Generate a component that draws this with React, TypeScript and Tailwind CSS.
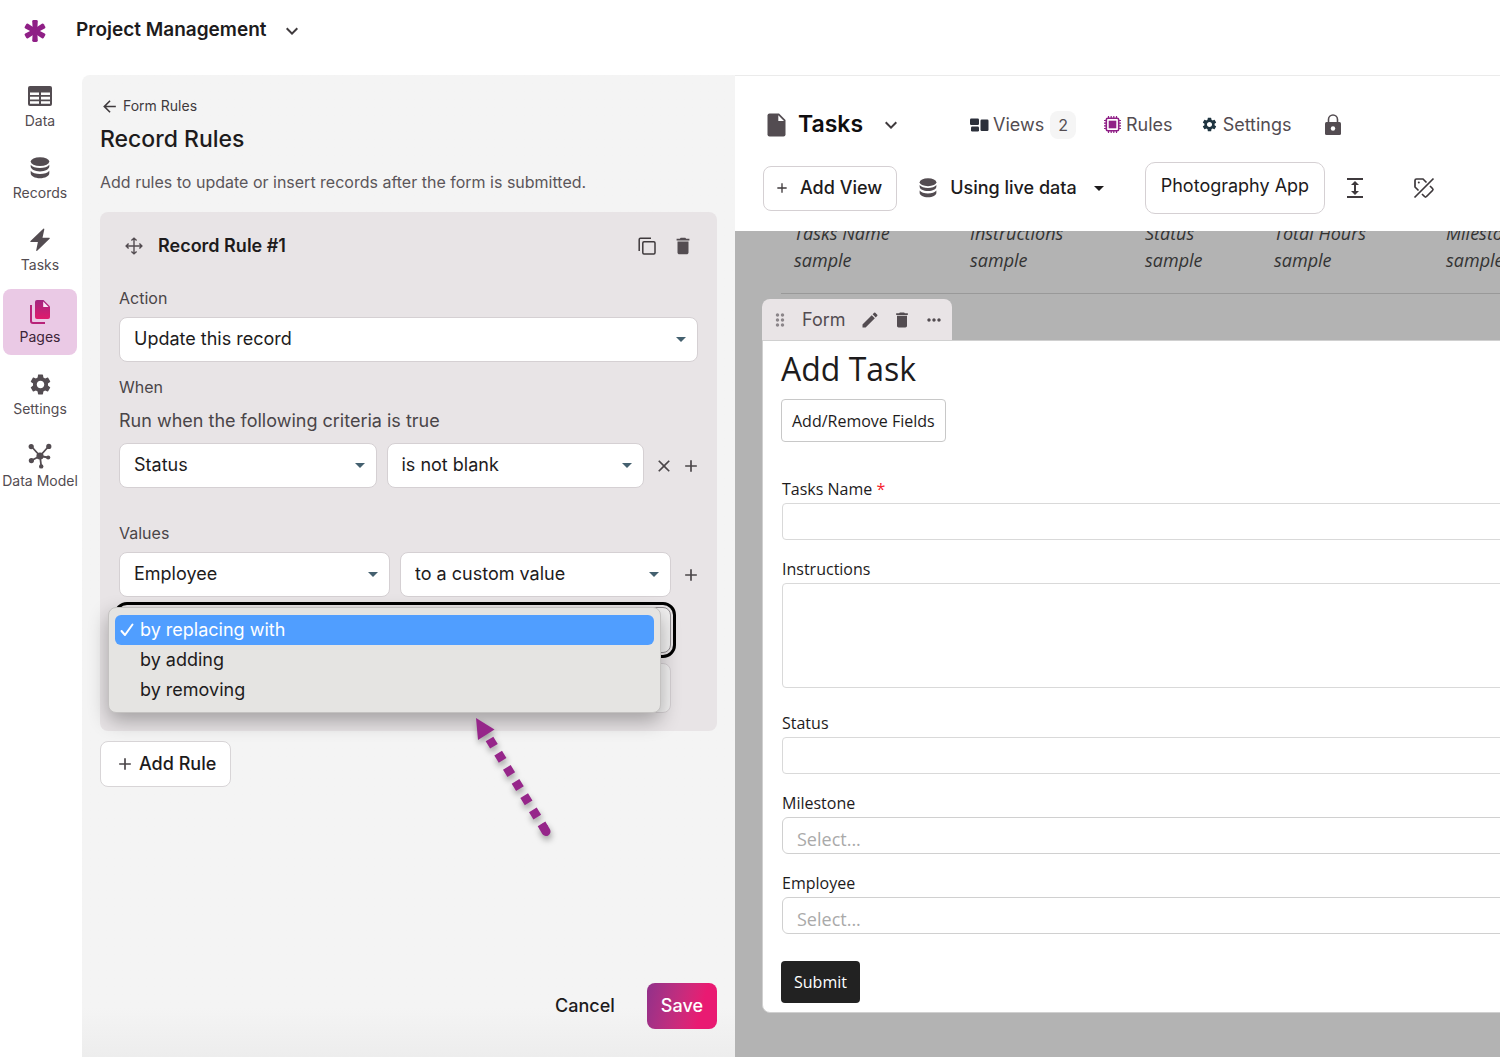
import { useState } from 'react';
import type { ReactNode, SelectHTMLAttributes } from 'react';
import { clsx } from 'clsx';
import {
  MdAdd,
  MdArrowBack,
  MdClose,
  MdDelete,
  MdDragIndicator,
  MdEdit,
  MdExpand,
  MdKeyboardArrowDown,
  MdMoreHoriz,
  MdSettings,
} from 'react-icons/md';

const LogoIcon = () => (
  <svg width="24" height="24" viewBox="0 0 24 24" fill="#8f1f86" aria-hidden="true">
    {[0, 60, 120, 180, 240, 300].map(angle => (
      <path key={angle} transform={`rotate(${angle} 12 12)`} d="M9.8 12 9.200 2.400Q9.200 1 10.600 1h2.800q1.400 0 1.400 1.400L14.200 12Z" />
    ))}
  </svg>
);

const TableIcon = () => (
  <svg width="26" height="20" viewBox="0 0 26 20" aria-hidden="true">
    <rect x="1" y="0" width="24" height="20" rx="2" fill="#534c51" />
    <path d="M3 6.5h9v2.6H3zM14 6.5h9v2.6h-9zM3 10.8h9v2.6H3zM14 10.8h9v2.6h-9zM3 15.2h9v2.6H3zM14 15.2h9v2.6h-9z" fill="#fff" />
  </svg>
);

const DatabaseIcon = ({ className }: { className?: string }) => (
  <svg viewBox="0 0 20 22" className={className} fill="currentColor" aria-hidden="true">
    <ellipse cx="10" cy="4.6" rx="9.3" ry="4.4" />
    <path d="M.7 7.8c1.6 2.2 5.2 3.2 9.300 3.200s7.700-1 9.300-3.200v1.800c0 2.600-4.200 4.800-9.300 4.800S.7 12.200 .7 9.600z" />
    <path d="M.7 13.800c1.600 2.200 5.200 3.200 9.300 3.200s7.700-1 9.300-3.200v2.400c0 2.800-4.200 5-9.300 5S.7 19 .7 16.200z" />
  </svg>
);

const BoltIcon = () => (
  <svg width="22" height="24" viewBox="0 0 22 24" fill="#534c51" aria-hidden="true">
    <path d="M14.300.8 1.500 13q-.8 1 .4 1h7L7.200 22.200q0 1.200 1 .5L20.600 10.800q.8-1-.4-1h-6.700L15.300 1.400q0-1.200-1-.6Z" />
  </svg>
);

const PagesIcon = () => (
  <svg width="22" height="26" viewBox="0 0 22 26" aria-hidden="true">
    <defs>
      <linearGradient id="pages" x1="0" y1="0" x2="0" y2="1">
        <stop offset="0" stopColor="#a32680" />
        <stop offset="1" stopColor="#e01a6c" />
      </linearGradient>
    </defs>
    <path d="M2 6v16q0 2 2 2h12" fill="none" stroke="#b82279" strokeWidth="2" />
    <path d="M8 1h6.500L21 7.500V18q0 2-2 2H8q-2 0-2-2V3q0-2 2-2Z" fill="url(#pages)" />
    <path d="M14.200 2.600V8h5.400Z" fill="#fbe9f6" />
  </svg>
);

const ModelIcon = () => (
  <svg width="24" height="26" viewBox="0 0 24 26" fill="#534c51" stroke="#534c51" aria-hidden="true">
    <path d="M12 13 3.500 3.500M12 13l8.500-9.500M12 13l-8.500 4.500M12 13l8 1.500M12 13l1.200 10" strokeWidth="1.800" />
    <g stroke="none">
      <circle cx="12" cy="13" r="3.600" />
      <circle cx="3.200" cy="3.600" r="2.600" />
      <circle cx="20.800" cy="3.400" r="2.600" />
      <circle cx="3.400" cy="17.600" r="2.600" />
      <circle cx="20.200" cy="14.500" r="2.100" />
      <circle cx="13.200" cy="23.400" r="2.200" />
    </g>
  </svg>
);

const MoveIcon = () => (
  <svg width="18" height="18" viewBox="0 0 18 18" fill="none" stroke="#534c51" strokeWidth="1.400" aria-hidden="true">
    <path d="M9 1.200v15.600M1.200 9h15.600M6.400 3.600 9 1.100l2.600 2.500M6.400 14.400 9 16.900l2.600-2.500M3.600 6.400 1.100 9l2.500 2.600M14.400 6.400 16.900 9l-2.500 2.600" />
  </svg>
);

const CopyIcon = () => (
  <svg width="18" height="18" viewBox="0 0 18 18" fill="none" stroke="#3f3a3d" strokeWidth="1.500" aria-hidden="true">
    <rect x="4.800" y="4.800" width="12.200" height="12.200" rx="1.200" />
    <path d="M1.200 14V2.400q0-1.200 1.200-1.200H13" />
  </svg>
);

const PageIcon = () => (
  <svg width="19" height="24" viewBox="0 0 19 24" aria-hidden="true">
    <path d="M2.500.5H12L18.500 7v14.500q0 2-2 2h-14q-2 0-2-2v-19q0-2 2-2Z" fill="#534c51" />
    <path d="M11.300 2.300V8H17Z" fill="#fff" />
  </svg>
);

const ViewsIcon = () => (
  <svg width="19" height="14" viewBox="0 0 19 14" fill="#2b2f3a" aria-hidden="true">
    <rect x="0" y="0.500" width="9" height="6.500" rx="1.200" />
    <rect x="1" y="8.500" width="8" height="5" rx="1.200" />
    <rect x="10.500" y="1.500" width="8" height="11.500" rx="1.200" />
  </svg>
);

const ChipIcon = () => (
  <svg width="17" height="17" viewBox="0 0 17 17" fill="none" stroke="#8f1f86" aria-hidden="true">
    <rect x="2.300" y="2.300" width="12.400" height="12.400" rx="1.500" strokeWidth="1.600" />
    <rect x="4.700" y="4.700" width="7.600" height="7.600" fill="#8f1f86" stroke="none" />
    <path
      d="M4.500 0v2M7.200 0v2M9.800 0v2M12.500 0v2M4.500 15v2M7.200 15v2M9.800 15v2M12.500 15v2M0 4.500h2M0 7.200h2M0 9.800h2M0 12.500h2M15 4.500h2M15 7.200h2M15 9.800h2M15 12.500h2"
      strokeWidth="1.200"
    />
  </svg>
);

const LockIcon = () => (
  <svg width="18" height="22" viewBox="0 0 18 22" aria-hidden="true">
    <path d="M4.500 9V5.500a4.500 4.500 0 0 1 9 0V9" fill="none" stroke="#534c51" strokeWidth="1.600" />
    <rect x="1" y="8" width="16" height="13" rx="1.500" fill="#534c51" />
    <circle cx="9" cy="14.500" r="2.200" fill="#fff" />
  </svg>
);

const TagOffIcon = () => (
  <svg width="22" height="22" viewBox="0 0 22 22" fill="none" stroke="#3d383b" strokeWidth="1.700" aria-hidden="true">
    <path d="M5.500 13.500 2 10V3.500Q2 2 3.500 2H10l3.500 3.500M17 9l2.500 2.500q1 1 0 2l-6 6q-1 1-2 0L9 17" />
    <path d="M1.500 20.500 20.500 1.500" />
    <circle cx="5.800" cy="5.600" r="1" fill="#3d383b" stroke="none" />
  </svg>
);

const CheckIcon = () => (
  <svg width="14" height="14" viewBox="0 0 14 14" fill="none" stroke="currentColor" strokeWidth="2" strokeLinecap="round" strokeLinejoin="round" aria-hidden="true">
    <path d="M1.500 8 5 12 12.500 1.500" />
  </svg>
);

const Caret = ({ className }: { className?: string }) => (
  <svg width="10" height="5" viewBox="0 0 10 5" className={className} fill="currentColor" aria-hidden="true">
    <path d="M0 0h10L5 5z" />
  </svg>
);

type SelectProps = SelectHTMLAttributes<HTMLSelectElement> & { wrapperClass?: string };

function Select({ wrapperClass, children, ...props }: SelectProps) {
  return (
    <div className={clsx('relative', wrapperClass)}>
      <select
        {...props}
        className="block h-[45px] w-full appearance-none rounded-lg border border-[#d5d0d3] bg-white pr-9 pb-0.5 pl-3.5 text-lg text-[#1d1b1c]"
      >
        {children}
      </select>
      <Caret className="pointer-events-none absolute top-5 right-3 text-[#44606f]" />
    </div>
  );
}

const navItems = [
  { label: 'Data', icon: <TableIcon /> },
  { label: 'Records', icon: <DatabaseIcon className="h-[22px] w-5" /> },
  { label: 'Tasks', icon: <BoltIcon /> },
  { label: 'Pages', icon: <PagesIcon /> },
  { label: 'Settings', icon: <MdSettings className="size-[25px]" /> },
  { label: 'Data Model', icon: <ModelIcon /> },
];

function Sidebar() {
  const [active, setActive] = useState('Pages');

  return (
    <nav className="flex w-[82px] shrink-0 flex-col gap-1.5 pl-[3px] text-[#534c51]">
      {navItems.map(item => (
        <button
          key={item.label}
          onClick={() => setActive(item.label)}
          className={clsx(
            'flex h-[66px] w-[74px] flex-col items-center rounded-lg pt-2.5 text-sm whitespace-nowrap',
            active === item.label && 'bg-[#eac9e5] text-[#3c2438]'
          )}
        >
          <span className="flex h-[26px] items-center justify-center">{item.icon}</span>
          <span className="mt-0.5 leading-5">{item.label}</span>
        </button>
      ))}
    </nav>
  );
}

const valueModes = ['by replacing with', 'by adding', 'by removing'];

function ValueModeMenu() {
  const [selected, setSelected] = useState(valueModes[0]);

  return (
    <ul
      role="listbox"
      aria-label="Value mode"
      className="absolute top-0 -left-[11px] z-10 w-[553px] rounded-lg border border-[#c4c2c1] bg-[#e5e4e2] px-1.5 py-[7px] shadow-[0_8px_20px_rgba(0,0,0,0.3)]"
    >
      {valueModes.map(mode => (
        <li
          key={mode}
          role="option"
          aria-selected={selected === mode}
          onClick={() => setSelected(mode)}
          className={clsx('flex h-[30px] items-center rounded-md pl-[5px] text-lg', selected === mode ? 'bg-[#509eff] text-white' : 'text-[#1d1b1c]')}
        >
          <span className="w-5">{selected === mode && <CheckIcon />}</span>
          {mode}
        </li>
      ))}
    </ul>
  );
}

function RecordRule() {
  return (
    <section className="rounded-lg bg-[#e8e4e6] px-[19px] pb-[18px]">
      <header className="flex h-[67px] items-center pl-1.5">
        <MoveIcon />
        <h2 className="ml-[15px] text-lg font-semibold text-[#1d1b1c]">Record Rule #1</h2>
        <button aria-label="Duplicate rule" className="ml-auto">
          <CopyIcon />
        </button>
        <button aria-label="Delete rule" className="mr-1 ml-4 text-[#534c51]">
          <MdDelete className="size-[22px]" />
        </button>
      </header>

      <label htmlFor="action" className="mt-[7px] block text-base leading-6 text-[#4a4548]">
        Action
      </label>
      <Select id="action" wrapperClass="mt-[7px]">
        <option>Update this record</option>
      </Select>

      <h3 className="mt-[13px] text-base leading-6 text-[#4a4548]">When</h3>
      <p className="mt-2.5 text-lg leading-6 text-[#4a4548]">Run when the following criteria is true</p>
      <div className="mt-2.5 flex items-center">
        <Select aria-label="Criteria field" wrapperClass="flex-1">
          <option>Status</option>
        </Select>
        <Select aria-label="Criteria operator" wrapperClass="ml-2.5 flex-1">
          <option>is not blank</option>
        </Select>
        <button aria-label="Remove criteria" className="ml-2.5 text-[#4a4548]">
          <MdClose className="size-5" />
        </button>
        <button aria-label="Add criteria" className="-mr-[3px] ml-[7px] text-[#4a4548]">
          <MdAdd className="size-5" />
        </button>
      </div>

      <h3 className="mt-[33px] text-base leading-6 text-[#4a4548]">Values</h3>
      <div className="mt-[7px] flex items-center">
        <Select aria-label="Value field" wrapperClass="flex-1">
          <option>Employee</option>
        </Select>
        <Select aria-label="Value source" wrapperClass="ml-2.5 flex-1">
          <option>to a custom value</option>
        </Select>
        <button aria-label="Add value" className="-mr-[3px] ml-2.5 text-[#4a4548]">
          <MdAdd className="size-5" />
        </button>
      </div>

      <div className="relative mt-2.5 mr-[27px]">
        <select
          aria-label="Value mode"
          className="block h-[46px] w-full appearance-none rounded-lg border border-[#8f8b8e] bg-[#f1f0f0] pl-3.5 text-lg outline-3 outline-offset-2 outline-black"
        >
          <option>by replacing with</option>
        </select>
        <ValueModeMenu />
        <input aria-label="Custom value" className="mt-2.5 block h-[50px] w-full rounded-lg border border-[#d5d0d3] bg-[#f1f0f0] px-3.5 text-lg" />
      </div>
    </section>
  );
}

const PointerArrow = () => (
  <svg
    width="90"
    height="140"
    viewBox="0 0 90 140"
    className="pointer-events-none absolute top-[637px] left-[388px] z-20 drop-shadow-[1px_4px_3px_rgba(0,0,0,0.35)]"
    aria-hidden="true"
  >
    <path d="M6 6 24.500 17.500 8 28z" fill="#96268a" />
    <path d="M19.500 27 74 116" stroke="#96268a" strokeWidth="9" strokeDasharray="8.500 8.100" />
    <path d="M74 116 76 119.500" stroke="#96268a" strokeWidth="9" strokeLinecap="round" />
  </svg>
);

function RulesPanel() {
  return (
    <main className="relative mt-0.5 flex w-[653px] shrink-0 flex-col rounded-tl-lg bg-[#f4f4f4] bg-linear-to-t from-[#ededed] to-[#f4f4f4] to-5% px-[18px] pb-7">
      <a href="#form-rules" className="mt-[21px] flex items-center gap-1 text-sm leading-5 text-[#3f3a3d]">
        <MdArrowBack className="size-[19px]" />
        Form Rules
      </a>
      <h1 className="mt-[7px] text-[23px] leading-8 font-medium text-[#1d1b1c]">Record Rules</h1>
      <p className="mt-[15px] mb-[18px] text-base leading-6 text-[#5b565a]">Add rules to update or insert records after the form is submitted.</p>

      <RecordRule />

      <button className="mt-2.5 flex h-[46px] items-center gap-1 self-start rounded-lg border border-[#d8d5d7] bg-white px-3.5 text-lg font-medium text-[#1d1b1c]">
        <MdAdd className="size-5 text-[#4a4548]" />
        Add Rule
      </button>

      <div className="mt-auto flex items-center justify-end gap-8">
        <button className="text-lg font-medium text-[#1d1b1c]">Cancel</button>
        <button className="h-[46px] rounded-lg bg-linear-105 from-[#91308a] to-[#e91a72] to-75% px-3.5 text-lg font-medium text-white">
          Save
        </button>
      </div>
      <PointerArrow />
    </main>
  );
}

function PageToolbar() {
  return (
    <header className="h-[156px] border-t border-[#ebebeb] bg-white pl-7">
      <div className="flex h-[97px] items-center pl-1 text-lg text-[#534c51]">
        <PageIcon />
        <h2 className="ml-3 text-[23px] font-semibold text-[#0f0e0f]">Tasks</h2>
        <button aria-label="Choose page" className="ml-4 text-[#3f3a3d]">
          <MdKeyboardArrowDown className="size-6" />
        </button>
        <a href="#views" className="ml-[67px] flex items-center gap-1">
          <ViewsIcon />
          Views
          <span className="ml-0.5 rounded-lg bg-[#f5f5f5] px-2 text-base leading-7">2</span>
        </a>
        <a href="#rules" className="ml-7 flex items-center gap-[5px]">
          <ChipIcon />
          Rules
        </a>
        <a href="#settings" className="ml-7 flex items-center gap-[5px]">
          <MdSettings className="size-[17px] text-[#1f3440]" />
          Settings
        </a>
        <button aria-label="Page permissions" className="ml-8">
          <LockIcon />
        </button>
      </div>
      <div className="-mt-[11px] flex h-[52px] items-center text-lg text-[#1d1b1c]">
        <button className="flex h-[45px] items-center gap-2.5 rounded-lg border border-[#d5d0d3] pr-3.5 pl-2.5 font-medium whitespace-nowrap">
          <MdAdd className="size-4 text-[#3f3a3d]" />
          Add View
        </button>
        <button className="ml-[22px] flex items-center font-medium whitespace-nowrap">
          <DatabaseIcon className="mr-[13px] h-5 w-[18px] text-[#534c51]" />
          Using live data
          <Caret className="ml-[17px]" />
        </button>
        <button className="ml-[41px] h-[52px] rounded-[10px] border border-[#d5d0d3] px-[15px] pb-1 whitespace-nowrap">Photography App</button>
        <button aria-label="Expand height" className="ml-[18px] text-[#3f3a3d]">
          <MdExpand className="size-6" />
        </button>
        <button aria-label="Hide labels" className="ml-[46px]">
          <TagOffIcon />
        </button>
      </div>
    </header>
  );
}

const columns = [
  { name: 'Tasks Name', width: 'w-[176px]' },
  { name: 'Instructions', width: 'w-[175px]' },
  { name: 'Status', width: 'w-[129px]' },
  { name: 'Total Hours', width: 'w-[172px]' },
  { name: 'Milestone', width: 'w-[148px]' },
];

function SampleTable() {
  return (
    <table className="-mt-[11px] ml-[46px] w-[800px] table-fixed border-b border-[#999] text-left text-lg text-[#333] italic">
      <thead>
        <tr>
          {columns.map(column => (
            <th key={column.name} className={clsx('h-[27px] pl-[13px] leading-[27px] font-normal whitespace-nowrap', column.width)}>
              {column.name}
            </th>
          ))}
        </tr>
      </thead>
      <tbody>
        <tr>
          {columns.map(column => (
            <td key={column.name} className="pb-[19px] pl-[13px] leading-[27px]">
              sample
            </td>
          ))}
        </tr>
      </tbody>
    </table>
  );
}

function Field({ label, id, children }: { label: ReactNode; id: string; children: ReactNode }) {
  return (
    <div className="ml-px">
      <label htmlFor={id} className="block text-base leading-6">
        {label}
      </label>
      {children}
    </div>
  );
}

function FormView() {
  return (
    <div className="mt-[5px] ml-[27px] w-[860px]">
      <div className="flex h-[41px] w-[190px] items-center rounded-t-lg bg-[#e9e4e6] pl-2 text-[#534c51]">
        <MdDragIndicator className="size-5 text-[#8c868a]" />
        <span className="ml-3 font-[Inter,sans-serif] text-lg">Form</span>
        <button aria-label="Edit form" className="ml-3.5">
          <MdEdit className="size-5" />
        </button>
        <button aria-label="Delete form" className="ml-3">
          <MdDelete className="size-5" />
        </button>
        <button aria-label="More" className="ml-3">
          <MdMoreHoriz className="size-5" />
        </button>
      </div>
      <form onSubmit={e => e.preventDefault()} className="rounded-b-lg border border-[#d0d0d0] bg-white px-[18px] pb-[9px] text-[#1d1b1c]">
        <h2 className="pt-1 text-[32px] leading-12">Add Task</h2>
        <button type="button" className="mt-1.5 mb-[35px] h-[43px] rounded-sm border border-[#c8c8c8] px-2.5 text-base">
          Add/Remove Fields
        </button>
        <div className="flex flex-col gap-[17px]">
          <Field
            id="task-name"
            label={
              <>
                Tasks Name <span className="text-[#f5222d]">*</span>
              </>
            }
          >
            <input id="task-name" className="mt-0.5 block h-[37px] w-full rounded-sm border border-[#d9d9d9] px-3.5" />
          </Field>
          <Field id="instructions" label="Instructions">
            <textarea id="instructions" className="mt-0.5 mb-1.5 block h-[105px] w-full resize-none rounded-sm border border-[#d9d9d9] px-3.5" />
          </Field>
          <Field id="status" label="Status">
            <input id="status" className="mt-0.5 block h-[37px] w-full rounded-sm border border-[#d9d9d9] px-3.5" />
          </Field>
          <Field id="milestone" label="Milestone">
            <select id="milestone" className="mt-0.5 block h-[37px] w-full appearance-none rounded-md border border-[#d0d0d0] px-3.5 pt-1.5 text-lg text-[#aaa]">
              <option>Select...</option>
            </select>
          </Field>
          <Field id="employee" label="Employee">
            <select id="employee" className="mt-0.5 block h-[37px] w-full appearance-none rounded-md border border-[#d0d0d0] px-3.5 pt-1.5 text-lg text-[#aaa]">
              <option>Select...</option>
            </select>
          </Field>
        </div>
        <button type="submit" className="mt-[27px] h-[42px] rounded-sm bg-[#222] px-[13px] text-base text-white">
          Submit
        </button>
      </form>
    </div>
  );
}

export default function App() {
  return (
    <div className="flex min-h-screen flex-col overflow-hidden bg-white font-[Inter,sans-serif]">
      <header className="flex h-[73px] shrink-0 items-center pb-3 pl-[23px]">
        <LogoIcon />
        <button className="ml-[29px] flex items-center gap-3.5 text-[19px] font-semibold text-[#1d1b1c]">
          Project Management
          <MdKeyboardArrowDown className="size-6 text-[#3f3a3d]" />
        </button>
      </header>
      <div className="flex flex-1">
        <Sidebar />
        <RulesPanel />
        <section className="mt-0.5 min-w-0 flex-1 overflow-hidden bg-[#b3b3b3]">
          <PageToolbar />
          <div className="overflow-hidden font-['Open_Sans',sans-serif]">
            <SampleTable />
            <FormView />
          </div>
        </section>
      </div>
    </div>
  );
}
